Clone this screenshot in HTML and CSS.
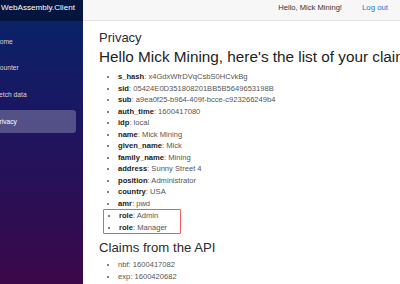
FILE: index.html
```html
<!DOCTYPE html>
<html lang="en">
<head>
    <meta charset="UTF-8">
    <meta name="viewport" content="width=device-width, initial-scale=1.0">
    <title>Privacy</title>
    <link rel="stylesheet" href="styles.css">
</head>
<body>

    <!-- Sidebar -->
    <div class="sidebar">
        <div class="brand">WebAssembly.Client</div>
        <ul class="nav">
            <li><a class="nav-link" href="#">Home</a></li>
            <li><a class="nav-link" href="#">Counter</a></li>
            <li><a class="nav-link" href="#">Fetch data</a></li>
            <li><a class="nav-link active" href="#">Privacy</a></li>
        </ul>
    </div>

    <!-- Main -->
    <div class="main">
        <div class="top-row">
            <span class="greeting">Hello, Mick Mining!</span>
            <a class="logout" href="#">Log out</a>
        </div>

        <div class="content">
            <h3 class="page-title">Privacy</h3>
            <h2 class="claims-title">Hello Mick Mining, here's the list of your claims:</h2>
            <ul class="claims first">
                <li><strong>s_hash</strong>: x4GdxWfrDVqCsbS0HCvkBg</li>
                <li><strong>sid</strong>: 05424E0D351808201BB5B5649653198B</li>
                <li><strong>sub</strong>: a9ea0f25-b964-409f-bcce-c923266249b4</li>
                <li><strong>auth_time</strong>: 1600417080</li>
                <li><strong>idp</strong>: local</li>
                <li><strong>name</strong>: Mick Mining</li>
                <li><strong>given_name</strong>: Mick</li>
                <li><strong>family_name</strong>: Mining</li>
                <li><strong>address</strong>: Sunny Street 4</li>
                <li><strong>position</strong>: Administrator</li>
                <li><strong>country</strong>: USA</li>
                <li><strong>amr</strong>: pwd</li>
            </ul>
            <div class="highlight">
                <ul class="claims">
                    <li><strong>role</strong>: Admin</li>
                    <li><strong>role</strong>: Manager</li>
                </ul>
            </div>

            <h3 class="api-title">Claims from the API</h3>
            <ul class="claims api">
                <li>nbf: 1600417082</li>
                <li>exp: 1600420682</li>
            </ul>
        </div>
    </div>

</body>
</html>
```

FILE: styles.css
```css
body {
    font-family: "Liberation Sans", Arial, sans-serif;
    margin: 0;
    display: flex;
    height: 284px;
    overflow: hidden;
    background-color: #fff;
    color: #333;
}

/* sidebar */
.sidebar {
    width: 83px;
    flex-shrink: 0;
    background-image: linear-gradient(180deg, #06256a 0%, #1d1560 45%, #3b0849 100%);
    overflow: hidden;
}
.brand {
    height: 21px;
    box-sizing: border-box;
    padding: 3px 0 0 1px;
    background-color: rgba(0, 0, 0, 0.4);
    color: #fff;
    font-size: 8.1px;
    line-height: 10px;
    white-space: nowrap;
}
.nav {
    list-style: none;
    margin: 0 0 0 -12px;
    padding: 8.5px 0 0 0;
}
.nav li {
    margin-bottom: 3.7px;
}
.nav-link {
    display: block;
    width: 88px;
    height: 23px;
    box-sizing: border-box;
    padding-left: 7px;
    line-height: 23px;
    font-size: 6.7px;
    color: #d7d7d7;
    text-decoration: none;
    border-radius: 3px;
    white-space: nowrap;
}
.nav-link.active {
    background-color: rgba(255, 255, 255, 0.25);
    color: #fff;
}

/* main */
.main {
    flex: 1;
    min-width: 0;
    overflow: hidden;
    display: flex;
    flex-direction: column;
}
.top-row {
    height: 21px;
    flex-shrink: 0;
    box-sizing: border-box;
    display: flex;
    justify-content: flex-end;
    gap: 20px;
    padding: 3px 12px 0 0;
    background-color: #f7f7f7;
    border-bottom: 1px solid #e3e3e3;
    font-size: 7.6px;
    line-height: 10px;
    white-space: nowrap;
}
.greeting {
    color: #333;
}
.logout {
    color: #2a72cf;
    text-decoration: none;
    font-size: 7.8px;
}
.content {
    padding-left: 16px;
    white-space: nowrap;
}
.page-title {
    font-size: 13px;
    font-weight: normal;
    line-height: 16px;
    margin: 9px 0 0 0;
    color: #2b2b2b;
}
.claims-title {
    font-size: 15.3px;
    font-weight: normal;
    line-height: 18px;
    margin: 2px 0 0 0;
    color: #222;
}
.claims {
    margin: 0;
    padding-left: 19px;
    font-size: 7.6px;
    line-height: 11.5px;
    color: #555;
}
.claims strong {
    color: #222;
}
.claims.first {
    margin-top: 5px;
}
.highlight {
    width: 76px;
    margin-left: 4px;
    border: 1px solid #ef5b5b;
    border-radius: 1px;
}
.highlight .claims {
    padding-left: 15px;
}
.api-title {
    font-size: 13.2px;
    font-weight: normal;
    line-height: 16px;
    margin: 6px 0 0 0;
    color: #2b2b2b;
}
.api {
    margin-top: 3px;
}
```
